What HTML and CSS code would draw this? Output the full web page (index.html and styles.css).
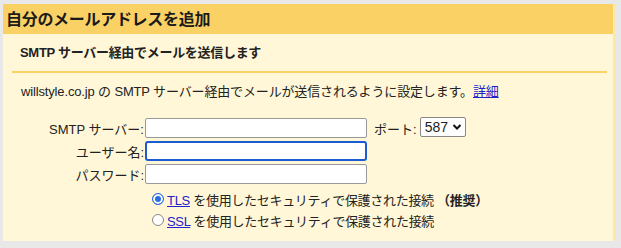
FILE: index.html
```html
<!DOCTYPE html>
<html lang="ja">
<head>
  <meta charset="UTF-8">
  <meta name="viewport" content="width=device-width, initial-scale=1.0">
  <title>自分のメールアドレスを追加</title>
  <link rel="stylesheet" href="styles.css">
</head>
<body>
  <div class="panel">
    <div class="panel-title">自分のメールアドレスを追加</div>

    <div class="panel-body">
      <div class="section-title">SMTP サーバー経由でメールを送信します</div>

      <p class="intro">willstyle.co.jp の SMTP サーバー経由でメールが送信されるように設定します。<a href="#">詳細</a></p>

      <form class="smtp-form">
        <label class="field-label" for="server">SMTP サーバー:</label>
        <div class="field-row">
          <input type="text" id="server" class="text-input">
          <span class="port-label">ポート:</span>
          <span class="port-select">587
            <svg width="10" height="8" viewBox="0 0 10 8"><path d="M1.5 2 L5 5.5 L8.5 2" fill="none" stroke="#111" stroke-width="2"/></svg>
          </span>
        </div>

        <label class="field-label" for="user">ユーザー名:</label>
        <div class="field-row">
          <input type="text" id="user" class="text-input focused">
        </div>

        <label class="field-label" for="pass">パスワード:</label>
        <div class="field-row">
          <input type="password" id="pass" class="text-input">
        </div>

        <div></div>
        <div class="radio-row first">
          <span class="radio checked"></span>
          <span><a href="#">TLS</a> を使用したセキュリティで保護された接続 <b>（推奨）</b></span>
        </div>

        <div></div>
        <div class="radio-row">
          <span class="radio"></span>
          <span><a href="#">SSL</a> を使用したセキュリティで保護された接続</span>
        </div>
      </form>
    </div>
  </div>
</body>
</html>
```

FILE: styles.css
```css
body {
  margin: 0;
  padding: 4px 0 0 3px;
  background-color: #e8e8e8;
  font-family: "Liberation Sans", Arial, "Noto Sans CJK JP", sans-serif;
  font-size: 13px;
  color: #222;
}

.panel {
  width: 610px;
  height: 237px;
  background-color: #fff7d8;
  border-right: 3px solid #fbe9a8;
}

.panel-title {
  height: 30px;
  line-height: 31px;
  padding-left: 3px;
  background-color: #fad165;
  font-size: 16px;
  font-weight: bold;
  color: #1a1a1a;
  letter-spacing: -0.3px;
}

.panel-body {
  padding: 0 6px 0 9px;
}

.section-title {
  padding: 10px 0 9px 8px;
  font-weight: bold;
  line-height: 18px;
  letter-spacing: -0.3px;
  border-bottom: 2px solid #fad165;
}

.intro {
  margin: 10px 0 0 9px;
  line-height: 18px;
  letter-spacing: -0.15px;
}

a {
  color: #2222cc;
}

.smtp-form {
  display: grid;
  grid-template-columns: 133px 1fr;
  row-gap: 3px;
  margin-top: 17px;
  align-items: center;
}

.field-label {
  text-align: right;
  padding-right: 1px;
}

.field-row {
  display: flex;
  align-items: center;
}

.text-input {
  width: 222px;
  height: 20px;
  margin: 0;
  padding: 0 4px;
  box-sizing: border-box;
  border: 1px solid #999;
  border-radius: 2px;
  background-color: #fff;
  font-size: 13px;
}

.text-input.focused {
  border: 2px solid #1b5bd4;
  border-radius: 3px;
}

.port-label {
  margin-left: 7px;
}

.port-select {
  display: inline-flex;
  align-items: center;
  gap: 4px;
  margin-left: 3px;
  height: 18px;
  padding: 0 3px 0 4px;
  border: 1px solid #888;
  border-radius: 2px;
  background-color: #fff;
  font-size: 14px;
  margin-top: -3px;
}

.radio-row {
  display: flex;
  align-items: center;
  gap: 3px;
  margin-left: 7px;
  height: 18px;
  letter-spacing: -0.3px;
}

.radio-row.first {
  margin-top: 3px;
}

.radio {
  width: 10px;
  height: 10px;
  border-radius: 50%;
  border: 1px solid #888;
  background-color: #fff;
}

.radio.checked {
  border-color: #2a6de0;
  background-color: #2a6de0;
  box-shadow: inset 0 0 0 2px #fff;
}
```
